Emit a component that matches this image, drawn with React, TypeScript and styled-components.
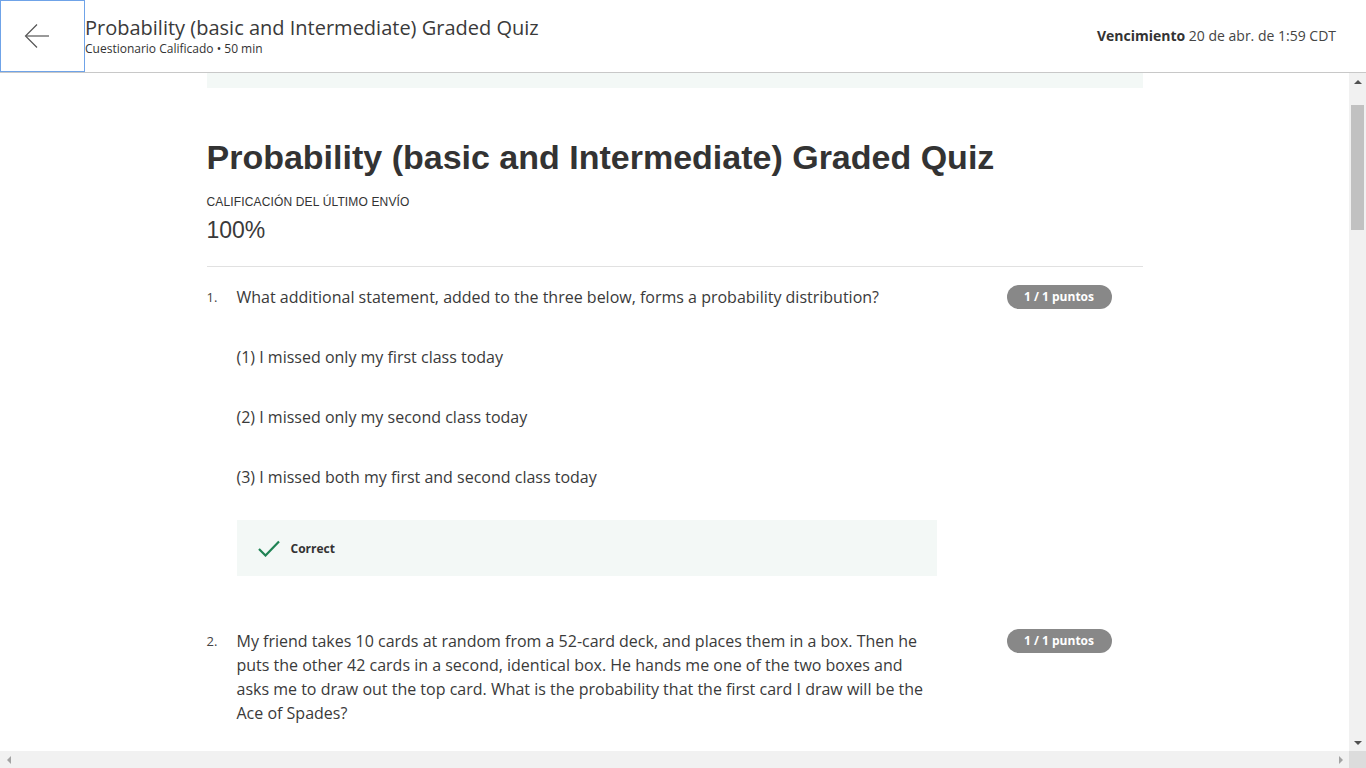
import React from "react";
import styled, { createGlobalStyle } from "styled-components";

const Global = createGlobalStyle`
  html, body { margin: 0; padding: 0; height: 100%; overflow: hidden; background: #fff; }
  #root { height: 100%; }
  * { box-sizing: border-box; }
`;

const Page = styled.div`
  width: 1366px;
  height: 768px;
  display: grid;
  grid-template-rows: 73px 1fr;
  font-family: "Open Sans", sans-serif;
  color: #333;
`;

const Header = styled.header`
  display: flex;
  align-items: stretch;
  border-bottom: 1px solid #c8c8c8;
  background: #fff;
`;

const BackButton = styled.button`
  width: 85px;
  height: 72px;
  border: 1px solid #6fa3e8;
  background: #fff;
  padding: 0;
  display: flex;
  align-items: center;
  justify-content: center;
  padding-right: 12px;
  cursor: pointer;
`;

const HeaderText = styled.div`
  flex: 1;
  display: flex;
  flex-direction: column;
  padding-top: 14px;
`;

const HeaderTitle = styled.div`
  font-size: 20px;
  line-height: 27px;
  color: #3a3a3a;
`;

const HeaderSub = styled.div`
  font-size: 12px;
  line-height: 16px;
  color: #333;
`;

const Due = styled.div`
  padding: 26px 30px 0 0;
  font-size: 14px;
  color: #444;
  b { font-weight: 700; color: #333; }
`;

const Viewport = styled.div`
  display: grid;
  grid-template-columns: 1fr 17px;
  grid-template-rows: 1fr 17px;
  min-height: 0;
`;

const Content = styled.main`
  overflow: hidden;
  display: flex;
  justify-content: center;
`;

const Column = styled.div`
  width: 936px;
  display: flex;
  flex-direction: column;
`;

const Banner = styled.div`
  height: 15px;
  background: #f3f8f6;
`;

const BigTitle = styled.h1`
  margin: 49px 0 0;
  font-family: "Liberation Sans", Arial, sans-serif;
  font-weight: 700;
  font-size: 34px;
  line-height: 40px;
  color: #333;
`;

const GradeLabel = styled.div`
  margin-top: 17px;
  font-family: "Liberation Sans", Arial, sans-serif;
  font-size: 12px;
  line-height: 16px;
  letter-spacing: 0.15px;
  color: #333;
`;

const GradeValue = styled.div`
  margin-top: 6px;
  font-family: "Liberation Sans", Arial, sans-serif;
  font-size: 23px;
  line-height: 28px;
  color: #3a3a3a;
`;

const Divider = styled.hr`
  margin: 22px 0 0;
  border: 0;
  border-top: 1px solid #e1e1e1;
`;

const Question = styled.section<{ $top: number }>`
  margin-top: ${(p) => p.$top}px;
  display: grid;
  grid-template-columns: 30px 700px 1fr;
`;

const Num = styled.div`
  font-size: 13px;
  line-height: 24px;
  color: #444;
`;

const Body = styled.div`
  display: flex;
  flex-direction: column;
`;

const Text = styled.p`
  margin: 0;
  font-size: 16px;
  line-height: 24px;
  color: #3a3a3a;
`;

const Option = styled(Text)`
  margin-top: 36px;
`;

const Badge = styled.div`
  justify-self: start;
  margin-left: 70px;
  height: 24px;
  border-radius: 12px;
  background: #888;
  color: #fff;
  font-size: 12px;
  font-weight: 700;
  line-height: 24px;
  width: 105px;
  text-align: center;
`;

const Feedback = styled.div`
  margin-top: 31px;
  height: 56px;
  background: #f3f8f6;
  display: flex;
  align-items: center;
  gap: 11px;
  padding-left: 21px;
  font-size: 12px;
  font-weight: 700;
  color: #333;
`;

const VBar = styled.div`
  background: #f1f1f1;
  display: grid;
  grid-template-rows: 17px 1fr 17px;
`;

const HBar = styled.div`
  background: #f1f1f1;
  display: grid;
  grid-template-columns: 17px 1fr 17px;
`;

const Corner = styled.div`
  background: #dcdcdc;
`;

const Arrow = styled.div`
  display: flex;
  align-items: center;
  justify-content: center;
`;

const Track = styled.div`
  padding: 15px 2px 0;
`;

const Thumb = styled.div`
  height: 125px;
  background: #c1c1c1;
`;

const Tri = ({ dir, color }: { dir: "up" | "down" | "left" | "right"; color: string }) => {
  const pts = {
    up: "0,4 4,0 8,4",
    down: "0,0 8,0 4,4",
    left: "4,0 4,8 0,4",
    right: "0,0 0,8 4,4",
  }[dir];
  const w = dir === "up" || dir === "down" ? 8 : 4;
  const h = dir === "up" || dir === "down" ? 4 : 8;
  return (
    <svg width={w} height={h} viewBox={`0 0 ${w} ${h}`}>
      <polygon points={pts} fill={color} />
    </svg>
  );
};

export default function App() {
  return (
    <>
      <Global />
      <Page>
        <Header>
          <BackButton aria-label="Back">
            <svg width="26" height="26" viewBox="0 0 26 26" fill="none" stroke="#555" strokeWidth="1.2">
              <path d="M25 13H2" />
              <path d="M13 1.5L1.5 13L13 24.5" />
            </svg>
          </BackButton>
          <HeaderText>
            <HeaderTitle>Probability (basic and Intermediate) Graded Quiz</HeaderTitle>
            <HeaderSub>Cuestionario Calificado • 50 min</HeaderSub>
          </HeaderText>
          <Due>
            <b>Vencimiento</b> 20 de abr. de 1:59 CDT
          </Due>
        </Header>
        <Viewport>
          <Content>
            <Column>
              <Banner />
              <BigTitle>Probability (basic and Intermediate) Graded Quiz</BigTitle>
              <GradeLabel>CALIFICACIÓN DEL ÚLTIMO ENVÍO</GradeLabel>
              <GradeValue>100%</GradeValue>
              <Divider />
              <Question $top={18}>
                <Num>1.</Num>
                <Body>
                  <Text>What additional statement, added to the three below, forms a probability distribution?</Text>
                  <Option>(1) I missed only my first class today</Option>
                  <Option>(2) I missed only my second class today</Option>
                  <Option>(3) I missed both my first and second class today</Option>
                  <Feedback>
                    <svg width="22" height="17" viewBox="0 0 22 17" fill="none" stroke="#1f8354" strokeWidth="2.2">
                      <path d="M1 9L7.5 15.5L21 1.5" />
                    </svg>
                    Correct
                  </Feedback>
                </Body>
                <Badge>1 / 1 puntos</Badge>
              </Question>
              <Question $top={53}>
                <Num>2.</Num>
                <Body>
                  <Text>
                    My friend takes 10 cards at random from a 52-card deck, and places them in a box. Then he puts the
                    other 42 cards in a second, identical box. He hands me one of the two boxes and asks me to draw out
                    the top card. What is the probability that the first card I draw will be the Ace of Spades?
                  </Text>
                </Body>
                <Badge>1 / 1 puntos</Badge>
              </Question>
            </Column>
          </Content>
          <VBar>
            <Arrow><Tri dir="up" color="#505050" /></Arrow>
            <Track><Thumb /></Track>
            <Arrow><Tri dir="down" color="#505050" /></Arrow>
          </VBar>
          <HBar>
            <Arrow><Tri dir="left" color="#a3a3a3" /></Arrow>
            <div />
            <Arrow><Tri dir="right" color="#a3a3a3" /></Arrow>
          </HBar>
          <Corner />
        </Viewport>
      </Page>
    </>
  );
}
